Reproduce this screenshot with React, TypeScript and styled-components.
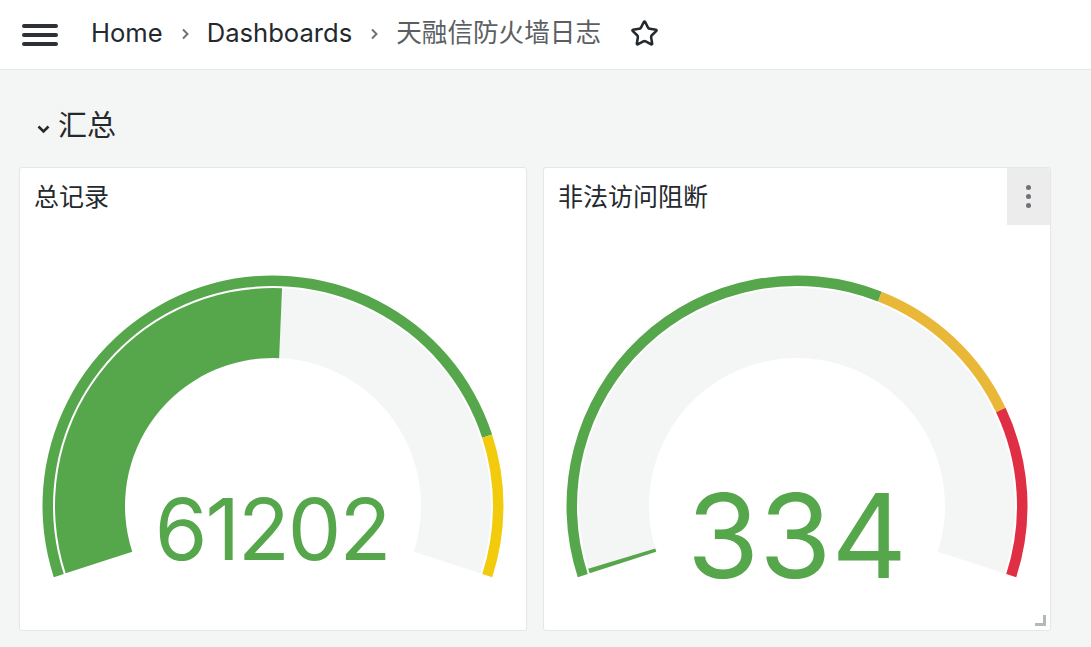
import React from 'react';
import styled, { createGlobalStyle } from 'styled-components';
import { Star } from 'lucide-react';

const THEME = {
  CANVAS: '#f4f5f5',
  BORDER: '#e4e7e7',
  TEXT: '#24292e',
  TEXT_SECONDARY: '#5b5f63',
  GREEN: '#56a64b',
  YELLOW: '#f2cc0c',
  ORANGE: '#eab839',
  RED: '#e02f44',
  GAUGE_BG: '#f4f5f5',
};

const FONT = `Inter, "Noto Sans CJK SC", sans-serif`;

const GlobalStyle = createGlobalStyle`
  html, body {
    margin: 0;
    padding: 0;
    background: ${THEME.CANVAS};
    font-family: ${FONT};
    color: ${THEME.TEXT};
  }
  * {
    box-sizing: border-box;
  }
`;

const Page = styled.div`
  width: 100%;
  min-height: 647px;
  display: flex;
  flex-direction: column;
`;

const TopBar = styled.header`
  height: 70px;
  background: white;
  border-bottom: 1px solid ${THEME.BORDER};
  display: flex;
  align-items: center;
  padding-left: 22px;
  padding-bottom: 3px;
`;

const MenuIcon = styled.svg`
  width: 36px;
  height: 22px;
  margin-right: 33px;
  margin-top: 3px;
`;

const Crumbs = styled.nav`
  display: flex;
  align-items: center;
  gap: 18px;
  font-size: 25.6px;
  line-height: 30px;
`;

interface CrumbProps {
  current?: boolean;
}

const Crumb = styled.span<CrumbProps>`
  color: ${(props) => (props.current ? THEME.TEXT_SECONDARY : THEME.TEXT)};
  white-space: nowrap;
`;

const CrumbSep = styled.svg`
  width: 8px;
  height: 12px;
  margin-top: 2px;
`;

const StarButton = styled.span`
  display: flex;
  align-items: center;
  margin-left: 29px;
  color: ${THEME.TEXT};
`;

const Main = styled.main`
  padding: 0 40px 16px 19px;
`;

const RowHeader = styled.div`
  display: flex;
  align-items: center;
  height: 40px;
  margin-top: 36px;
  margin-bottom: 21px;
  padding-left: 17px;
  gap: 7px;
`;

const RowChevron = styled.svg`
  width: 15px;
  height: 10px;
  margin-top: 6px;
`;

const RowTitle = styled.span`
  font-size: 29px;
  line-height: 40px;
`;

const PanelGrid = styled.div`
  display: grid;
  grid-template-columns: 1fr 1fr;
  gap: 16px;
`;

const Panel = styled.section`
  position: relative;
  height: 464px;
  background: white;
  border: 1px solid ${THEME.BORDER};
  border-radius: 3px;
  display: flex;
  flex-direction: column;
`;

const PanelHeader = styled.div`
  height: 57px;
  display: flex;
  align-items: center;
  padding-left: 14px;
`;

const PanelTitle = styled.h2`
  margin: 0;
  font-size: 25px;
  font-weight: 400;
  line-height: 30px;
  color: ${THEME.TEXT};
`;

const MenuButton = styled.div`
  margin-left: auto;
  width: 43px;
  height: 57px;
  background: #ececec;
  border-top-right-radius: 3px;
  display: flex;
  flex-direction: column;
  align-items: center;
  justify-content: center;
  gap: 4px;
`;

const Dot = styled.span`
  width: 5px;
  height: 5px;
  border-radius: 50%;
  background: #6e7175;
`;

const PanelBody = styled.div`
  flex: 1;
`;

const ResizeHandle = styled.svg`
  position: absolute;
  right: 4px;
  bottom: 4px;
  width: 11px;
  height: 11px;
`;

const GaugeSvg = styled.svg`
  display: block;
  width: 100%;
  height: 405px;
`;

const GaugeValue = styled.text`
  font-family: ${FONT};
  fill: ${THEME.GREEN};
`;

// gauge geometry (in body coordinates)
const CX = 253;
const CY = 281;
const START = 198;
const END = -18;
const SWEEP = START - END;

const pt = (r: number, deg: number) => {
  const a = (deg * Math.PI) / 180;
  return [CX + r * Math.cos(a), CY - r * Math.sin(a)];
};

const band = (r1: number, r2: number, a0: number, a1: number) => {
  const large = a0 - a1 > 180 ? 1 : 0;
  const [x0, y0] = pt(r2, a0);
  const [x1, y1] = pt(r2, a1);
  const [x2, y2] = pt(r1, a1);
  const [x3, y3] = pt(r1, a0);
  return `M${x0} ${y0} A${r2} ${r2} 0 ${large} 1 ${x1} ${y1} L${x2} ${y2} A${r1} ${r1} 0 ${large} 0 ${x3} ${y3} Z`;
};

const angleOf = (fraction: number) => START - SWEEP * fraction;

interface Step {
  to: number;
  color: string;
}

interface GaugeProps {
  value: string;
  fraction: number;
  steps: Step[];
  fontSize: number;
  baseline: number;
  tracking?: number;
}

const Gauge = ({ value, fraction, steps, fontSize, baseline, tracking = 0 }: GaugeProps) => {
  let from = 0;
  return (
    <GaugeSvg viewBox="0 0 506 405">
      {steps.map((s, i) => {
        const d = band(220, 230.5, angleOf(from), angleOf(s.to));
        from = s.to;
        return <path key={i} d={d} fill={s.color} />;
      })}
      <path d={band(148, 218, angleOf(fraction), END)} fill={THEME.GAUGE_BG} />
      <path d={band(148, 218, START, angleOf(fraction))} fill={THEME.GREEN} />
      <GaugeValue
        x={CX + tracking / 2}
        y={baseline}
        fontSize={fontSize}
        letterSpacing={tracking}
        textAnchor="middle"
      >
        {value}
      </GaugeValue>
    </GaugeSvg>
  );
};

export default function App() {
  return (
    <Page>
      <GlobalStyle />
      <TopBar>
        <MenuIcon viewBox="0 0 36 22">
          <rect x="0" y="0" width="36" height="4" rx="2" fill="#2d3136" />
          <rect x="0" y="9" width="36" height="4" rx="2" fill="#2d3136" />
          <rect x="0" y="18" width="36" height="4" rx="2" fill="#2d3136" />
        </MenuIcon>
        <Crumbs>
          <Crumb>Home</Crumb>
          <CrumbSep viewBox="0 0 8 12">
            <path d="M2 1.5 L6.5 6 L2 10.5" fill="none" stroke="#6e7175" strokeWidth="2" />
          </CrumbSep>
          <Crumb>Dashboards</Crumb>
          <CrumbSep viewBox="0 0 8 12">
            <path d="M2 1.5 L6.5 6 L2 10.5" fill="none" stroke="#6e7175" strokeWidth="2" />
          </CrumbSep>
          <Crumb current>天融信防火墙日志</Crumb>
        </Crumbs>
        <StarButton>
          <Star size={29} strokeWidth={2.1} />
        </StarButton>
      </TopBar>

      <Main>
        <RowHeader>
          <RowChevron viewBox="0 0 15 10">
            <path d="M2.5 2.5 L7.5 7.5 L12.5 2.5" fill="none" stroke={THEME.TEXT} strokeWidth="2.6" />
          </RowChevron>
          <RowTitle>汇总</RowTitle>
        </RowHeader>

        <PanelGrid>
          <Panel>
            <PanelHeader>
              <PanelTitle>总记录</PanelTitle>
            </PanelHeader>
            <PanelBody>
              <Gauge
                value="61202"
                fraction={0.511}
                fontSize={85}
                baseline={335}
                tracking={-2}
                steps={[
                  { to: 0.833, color: THEME.GREEN },
                  { to: 1, color: THEME.YELLOW },
                ]}
              />
            </PanelBody>
          </Panel>

          <Panel>
            <PanelHeader>
              <PanelTitle>非法访问阻断</PanelTitle>
              <MenuButton>
                <Dot />
                <Dot />
                <Dot />
              </MenuButton>
            </PanelHeader>
            <PanelBody>
              <Gauge
                value="334"
                fraction={0.006}
                fontSize={117}
                baseline={353}
                steps={[
                  { to: 0.6, color: THEME.GREEN },
                  { to: 0.8, color: THEME.ORANGE },
                  { to: 1, color: THEME.RED },
                ]}
              />
            </PanelBody>
            <ResizeHandle viewBox="0 0 11 11">
              <path d="M9.5 0 V9.5 H0" fill="none" stroke="#b5b7b9" strokeWidth="3" />
            </ResizeHandle>
          </Panel>
        </PanelGrid>
      </Main>
    </Page>
  );
}
